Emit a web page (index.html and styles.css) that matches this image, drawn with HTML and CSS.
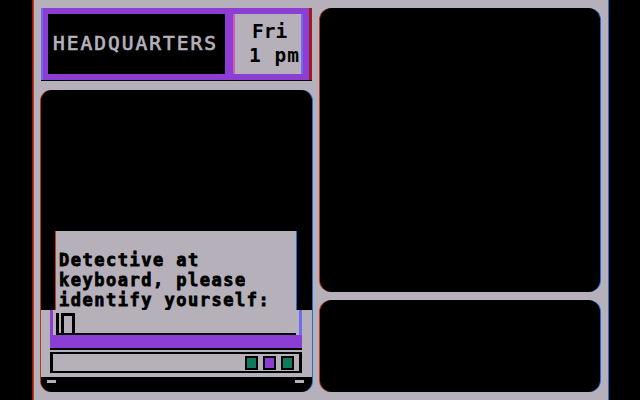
FILE: index.html
```html
<!DOCTYPE html>
<html lang="en">
<head>
    <meta charset="UTF-8">
    <title>Headquarters</title>
    <link rel="stylesheet" href="styles.css">
</head>
<body>
    <div class="screen">
        <div class="left-col">
            <div class="header">
                <div class="location">HEADQUARTERS</div>
                <div class="clock">
                    <div class="day">Fri</div>
                    <div class="time">1 pm</div>
                </div>
            </div>

            <div class="panel">
                <div class="view">
                    <div class="dialog">
                        <div>Detective at</div>
                        <div>keyboard, please</div>
                        <div>identify yourself:</div>
                    </div>
                </div>
                <div class="console">
                    <div class="input-row">
                        <div class="input-field">
                            <span class="cursor"><span class="cursor-arch"></span></span>
                        </div>
                    </div>
                    <div class="prompt-bar"></div>
                    <div class="status">
                        <span class="light green"></span>
                        <span class="light purple"></span>
                        <span class="light green"></span>
                    </div>
                </div>
                <div class="cap">
                    <span class="notch"></span>
                    <span class="notch"></span>
                </div>
            </div>
        </div>

        <div class="right-col">
            <div class="scene"></div>
            <div class="notes"></div>
        </div>
    </div>
</body>
</html>
```

FILE: styles.css
```css
/* Screen */
body {
    margin: 0;
    background: #000;
    font-family: 'DejaVu Sans Mono', 'Liberation Mono', monospace;
    font-weight: bold;
    font-size: 19.5px;
}

.screen {
    margin-left: 33px;
    width: 576px;
    height: 400px;
    box-sizing: border-box;
    padding: 8px 9px 8px 8px;
    background: #b5b0ba;
    display: flex;
    gap: 8px;
    box-shadow: inset 1px 0 0 #c8361c, -1px 0 0 #8a1c10, inset -1px 0 0 #1d6fd0;
}

/* Left column */
.left-col {
    width: 271px;
    display: flex;
    flex-direction: column;
    gap: 10px;
}

.header {
    height: 72px;
    box-sizing: border-box;
    padding: 6px 9px 6px 7px;
    background: #8c3ed4;
    display: flex;
    gap: 8px;
    box-shadow: inset 2px 0 0 #6f6cf0, inset -3px 0 0 #a01c1c, 0 1px 0 #000;
}

.location {
    width: 177px;
    background: #000;
    color: #b5b0ba;
    display: flex;
    align-items: center;
    padding-left: 5px;
    box-sizing: border-box;
    line-height: 20px;
    letter-spacing: 2px;
    font-weight: normal;
    -webkit-text-stroke: 0.7px #b5b0ba;
}

.clock {
    width: 70px;
    background: #b5b0ba;
    color: #000;
    line-height: 24px;
    padding-top: 6px;
    box-sizing: border-box;
    box-shadow: inset 2px 0 0 #d05fb0, inset -2px 0 0 #6f6cf0;
}

.day {
    padding-left: 19px;
}

.time {
    padding-left: 16px;
    letter-spacing: 1px;
}

.panel {
    height: 302px;
    background: #000;
    border-radius: 11px;
    display: flex;
    flex-direction: column;
    box-shadow: -1px 0 0 #b8361c, 1px 0 0 #1d6fd0;
}

.view {
    flex: 1;
    display: flex;
    align-items: flex-end;
}

.dialog {
    width: 240px;
    margin-left: 15px;
    background: #b5b0ba;
    color: #000;
    box-sizing: border-box;
    padding: 19px 0 0 3px;
    font-size: 17px;
    line-height: 20px;
    letter-spacing: 1.5px;
    -webkit-text-stroke: 0.8px #000;
    box-shadow: -1px 0 0 #c8361c, 1px 0 0 #1d6fd0;
}

.console {
    background: #b5b0ba;
    padding: 0 10px 4px 9px;
}

.input-row {
    border-left: 3px solid #8c3ed4;
    border-right: 3px solid #6f6cf0;
}

.input-field {
    height: 23px;
    margin: 0 3px;
    border-bottom: 2px solid #000;
    display: flex;
    align-items: flex-end;
}

.cursor {
    display: flex;
    width: 17px;
    height: 20px;
    border-left: 3px solid #000;
}

.cursor-arch {
    width: 8px;
    height: 18px;
    margin-left: 2px;
    border: 3px solid #000;
    border-bottom: none;
}

.prompt-bar {
    height: 13px;
    background: #8c3ed4;
    border-bottom: 2px solid #000;
}

.status {
    margin-top: 2px;
    height: 21px;
    box-sizing: border-box;
    border: 2px solid #000;
    border-left-width: 3px;
    border-right-width: 3px;
    display: flex;
    justify-content: flex-end;
    align-items: center;
    gap: 5px;
    padding-right: 5px;
}

.light {
    width: 9px;
    height: 10px;
    border: 2px solid #000;
}

.green {
    background: #0f7a5e;
}

.purple {
    background: #8c3ed4;
}

.cap {
    height: 15px;
    display: flex;
    justify-content: space-between;
    padding: 3px 8px 0 6px;
    box-sizing: border-box;
}

.notch {
    width: 9px;
    height: 3px;
    background: #b5b0ba;
}

/* Right column */
.right-col {
    width: 280px;
    display: flex;
    flex-direction: column;
    gap: 8px;
}

.scene,
.notes {
    background: #000;
    border-radius: 12px;
    box-shadow: -1px 0 0 #b8361c, 1px 0 0 #1d6fd0;
}

.scene {
    flex: 1;
}

.notes {
    height: 92px;
}
```
